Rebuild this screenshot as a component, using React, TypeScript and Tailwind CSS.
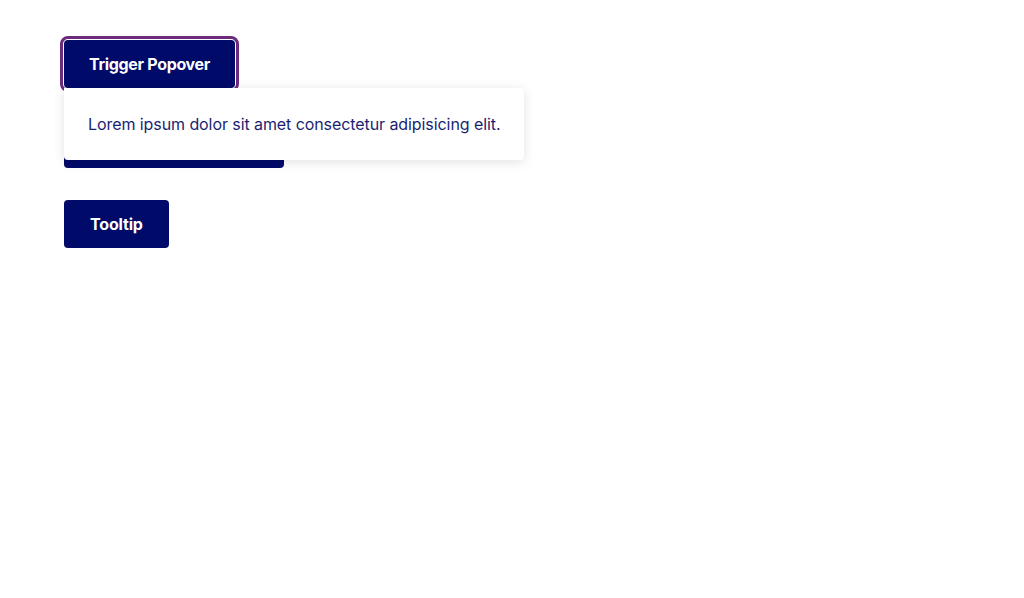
export default function App() {
  return (
    <div className="min-h-[598px] bg-white p-16 pt-10 font-['Inter',sans-serif]">
      <div className="flex flex-col items-start gap-8">
        <div className="relative">
          <button
            type="button"
            className="h-12 rounded bg-[#000a69] px-[25px] text-[16px] font-bold tracking-[-0.02em] text-white outline-[3px] outline-offset-1 outline-[#6b2a7c]"
          >
            Trigger Popover
          </button>
          <div className="absolute left-0 top-12 z-10 w-[460px] whitespace-nowrap rounded-b rounded-tr bg-white px-6 py-6 text-[16px] leading-6 tracking-[-0.005em] text-[#1a1f71] shadow-[0_2px_12px_rgba(0,0,0,0.12)]">
            Lorem ipsum dolor sit amet consectetur adipisicing elit.
          </div>
        </div>
        <button
          type="button"
          className="h-12 w-[220px] rounded bg-[#000a69] px-[26px] text-[16px] font-bold text-white"
        >
          Trigger Modal Dialog
        </button>
        <button
          type="button"
          className="h-12 rounded bg-[#000a69] px-[26px] text-[16px] font-bold tracking-[-0.01em] text-white"
        >
          Tooltip
        </button>
      </div>
    </div>
  );
}
